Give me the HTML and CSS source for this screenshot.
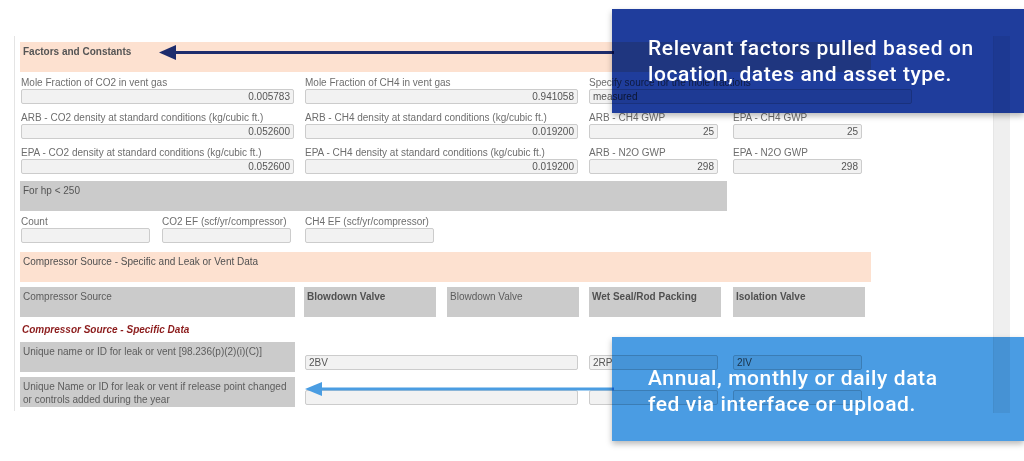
FILE: index.html
```html
<!DOCTYPE html>
<html>
<head>
<meta charset="utf-8">
<link rel="stylesheet" href="styles.css">
</head>
<body>
<div class="page">
  <div class="frame">
    <div class="panel">
      <div class="band band-peach">Factors and Constants</div>

      <div class="fields">
        <div class="field">
          <div class="label">Mole Fraction of CO2 in vent gas</div>
          <div class="input wide num">0.005783</div>
        </div>
        <div class="field">
          <div class="label">Mole Fraction of CH4 in vent gas</div>
          <div class="input wide num">0.941058</div>
        </div>
        <div class="field span2">
          <div class="label">Specify source for the mole fractions</div>
          <div class="input source">measured</div>
        </div>

        <div class="field">
          <div class="label">ARB - CO2 density at standard conditions (kg/cubic ft.)</div>
          <div class="input wide num">0.052600</div>
        </div>
        <div class="field">
          <div class="label">ARB - CH4 density at standard conditions (kg/cubic ft.)</div>
          <div class="input wide num">0.019200</div>
        </div>
        <div class="field">
          <div class="label">ARB - CH4 GWP</div>
          <div class="input small num">25</div>
        </div>
        <div class="field">
          <div class="label">EPA - CH4 GWP</div>
          <div class="input small num">25</div>
        </div>

        <div class="field">
          <div class="label">EPA - CO2 density at standard conditions (kg/cubic ft.)</div>
          <div class="input wide num">0.052600</div>
        </div>
        <div class="field">
          <div class="label">EPA - CH4 density at standard conditions (kg/cubic ft.)</div>
          <div class="input wide num">0.019200</div>
        </div>
        <div class="field">
          <div class="label">ARB - N2O GWP</div>
          <div class="input small num">298</div>
        </div>
        <div class="field">
          <div class="label">EPA - N2O GWP</div>
          <div class="input small num">298</div>
        </div>
      </div>

      <div class="band band-grey band-hp">For hp &lt; 250</div>

      <div class="count-row">
        <div class="field">
          <div class="label">Count</div>
          <div class="input small"></div>
        </div>
        <div class="field">
          <div class="label">CO2 EF (scf/yr/compressor)</div>
          <div class="input small"></div>
        </div>
        <div class="field">
          <div class="label">CH4 EF (scf/yr/compressor)</div>
          <div class="input small"></div>
        </div>
      </div>

      <div class="band band-peach band-second">Compressor Source - Specific and Leak or Vent Data</div>

      <div class="source-row">
        <div class="gbox gbox-main">Compressor Source</div>
        <div class="gbox gbox-col strong">Blowdown Valve</div>
        <div class="gbox gbox-col">Blowdown Valve</div>
        <div class="gbox gbox-col strong">Wet Seal/Rod Packing</div>
        <div class="gbox gbox-col strong">Isolation Valve</div>
      </div>

      <div class="subtitle">Compressor Source - Specific Data</div>

      <div class="data-row">
        <div class="gbox gbox-main">Unique name or ID for leak or vent [98.236(p)(2)(i)(C)]</div>
        <div class="input wide text">2BV</div>
        <div class="input small text">2RP</div>
        <div class="input small text">2IV</div>
      </div>
      <div class="data-row">
        <div class="gbox gbox-main">Unique Name or ID for leak or vent if release point changed or controls added during the year</div>
        <div class="input wide text"></div>
        <div class="input small text"></div>
        <div class="input small text"></div>
      </div>
    </div>
    <div class="scrollbar"></div>
  </div>

  <svg class="arrows" width="1024" height="461" viewBox="0 0 1024 461">
    <line x1="170" y1="52.5" x2="614" y2="52.5" stroke="#1d2c6c" stroke-width="3"/>
    <polygon points="159,52.5 176,45 176,60" fill="#1d2c6c"/>
    <line x1="318" y1="389" x2="614" y2="389" stroke="#4a9de2" stroke-width="3"/>
    <polygon points="305,389 322,382 322,396" fill="#4a9de2"/>
  </svg>

  <div class="callout callout-dark">
    <div class="callout-bg"></div>
    <p class="callout-text">Relevant factors pulled based on<br>location, dates and asset type.</p>
  </div>
  <div class="callout callout-light">
    <div class="callout-bg"></div>
    <p class="callout-text">Annual, monthly or daily data<br>fed via interface or upload.</p>
  </div>
</div>
</body>
</html>
```

FILE: styles.css
```css
* { box-sizing: border-box; }

html, body {
  margin: 0;
  padding: 0;
  background: #ffffff;
}

body {
  font-family: "Liberation Sans", Arial, sans-serif;
  font-size: 10px;
  color: #777777;
}

.page {
  position: relative;
  width: 1024px;
  height: 461px;
  overflow: hidden;
}

.frame {
  display: flex;
  padding-top: 36px;
  padding-left: 14px;
}

.panel {
  width: 979px;
  height: 375px;
  border-left: 1px solid #e4e4e4;
  padding: 6px 0 0 5px;
}

.scrollbar {
  width: 17px;
  height: 377px;
  background: #efefef;
  border-left: 1px solid #e6e6e6;
}

.band {
  height: 30px;
  padding: 3px 3px;
  line-height: 13px;
  font-size: 10px;
  color: #555555;
}

.band-peach {
  width: 851px;
  background: #fde1d0;
  font-weight: bold;
}

.band-second {
  margin-top: 9px;
  font-weight: normal;
  color: #505050;
}

.band-grey {
  background: #cbcbcb;
}

.band-hp {
  width: 707px;
  margin-top: 7px;
}

.fields {
  display: grid;
  grid-template-columns: 284px 284px 144px 144px;
  row-gap: 8px;
  margin-top: 5px;
  margin-left: 1px;
}

.field {
  display: flex;
  flex-direction: column;
}

.span2 {
  grid-column: span 2;
}

.label {
  height: 12px;
  line-height: 12px;
  white-space: nowrap;
  color: #6e6e6e;
}

.input {
  height: 15px;
  line-height: 13px;
  border: 1px solid #cccccc;
  border-radius: 2px;
  background: #f2f2f2;
  color: #555555;
  padding: 0 3px;
  white-space: nowrap;
  font-size: 10px;
}

.num { text-align: right; }

.wide { width: 273px; }
.small { width: 129px; }
.source { width: 323px; }

.count-row {
  display: grid;
  grid-template-columns: 141px 143px 144px;
  margin-top: 5px;
  margin-left: 1px;
}

.source-row {
  display: grid;
  grid-template-columns: 284px 143px 142px 144px 144px;
  margin-top: 5px;
}

.gbox {
  height: 30px;
  background: #cbcbcb;
  padding: 3px 3px;
  line-height: 13px;
  color: #5c5c5c;
  font-size: 10px;
}

.gbox-main { width: 275px; }
.gbox-col { width: 132px; }

.strong {
  font-weight: bold;
  color: #505050;
}

.subtitle {
  margin: 6px 0 6px 2px;
  line-height: 13px;
  font-weight: bold;
  font-style: italic;
  color: #8c1c1c;
}

.data-row {
  display: grid;
  grid-template-columns: 285px 284px 144px 144px;
  align-items: end;
  margin-bottom: 5px;
}

.data-row .input {
  margin-bottom: 2px;
}

.text { text-align: left; }

.arrows {
  position: absolute;
  left: 0;
  top: 0;
  pointer-events: none;
}

.callout {
  position: absolute;
  left: 612px;
  width: 412px;
  height: 104px;
  box-shadow: 0 3px 6px rgba(0, 0, 0, 0.28);
}

.callout-dark { top: 9px; }
.callout-light { top: 337px; }

.callout-bg {
  position: absolute;
  inset: 0;
  mix-blend-mode: multiply;
}

.callout-dark .callout-bg { background: #1f3d9c; }
.callout-light .callout-bg { background: #4a9ce3; }

.callout-text {
  position: relative;
  margin: 0;
  padding-left: 36px;
  font-family: Roboto, "Liberation Sans", sans-serif;
  font-size: 21px;
  font-weight: 500;
  letter-spacing: 0.6px;
  line-height: 26px;
  color: #ffffff;
}

.callout-dark .callout-text { padding-top: 26px; }
.callout-light .callout-text { padding-top: 28px; }
```
